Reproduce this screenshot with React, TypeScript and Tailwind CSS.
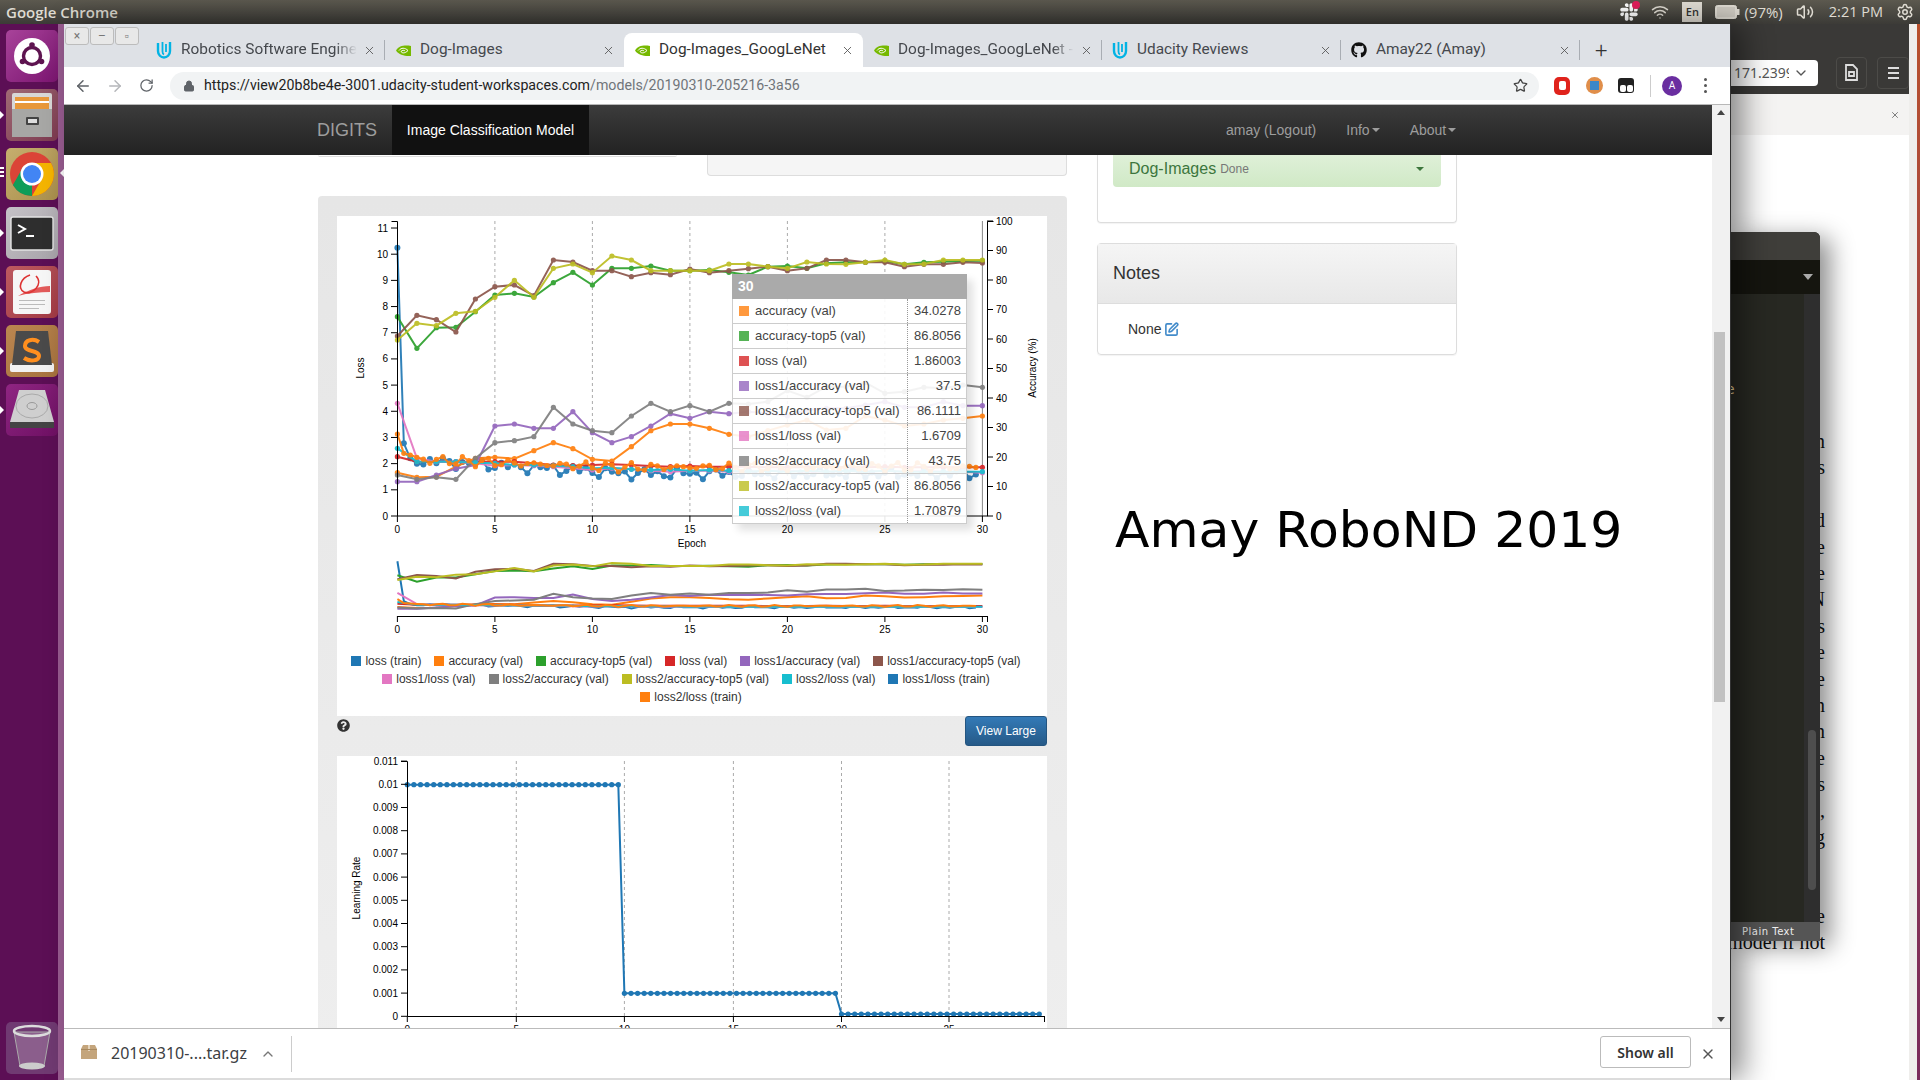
import { ArrowLeft, ArrowRight, ChevronDown, ChevronUp, Lock, RotateCw, Settings, Star, SquarePen, Volume2, Wifi, X } from "lucide-react";
import { FaGithub, FaQuestionCircle, FaSlack } from "react-icons/fa";

const C = {
  lossTrain: "#1f77b4",
  acc: "#ff7f0e",
  top5: "#2ca02c",
  loss: "#d62728",
  l1acc: "#9467bd",
  l1top5: "#8c564b",
  l1loss: "#e377c2",
  l2acc: "#7f7f7f",
  l2top5: "#bcbd22",
  l2loss: "#17becf",
};

// values read off the picture, one per epoch
const top5 = [350, 445, 383, 382, 335, 285, 280, 291, 248, 217, 255, 205, 205, 198, 212, 212, 210, 217, 225, 200, 198, 205, 190, 187, 187, 183, 193, 187, 185, 183, 182];
const l1top5 = [408, 346, 359, 396, 297, 260, 255, 287, 180, 186, 212, 212, 230, 218, 224, 207, 218, 212, 206, 200, 212, 205, 180, 180, 187, 187, 200, 193, 193, 187, 189];
const l2top5 = [420, 370, 377, 340, 334, 292, 241, 292, 205, 192, 218, 168, 180, 212, 212, 212, 212, 192, 192, 200, 205, 186, 192, 193, 187, 180, 193, 192, 180, 180, 180];
const l2acc = [825, 838, 832, 838, 775, 728, 722, 710, 622, 672, 692, 698, 648, 610, 635, 617, 635, 610, 612, 605, 572, 592, 560, 560, 548, 580, 575, 562, 565, 555, 562];
const l1acc = [845, 845, 825, 806, 795, 678, 672, 685, 685, 635, 698, 728, 710, 678, 641, 655, 635, 641, 635, 640, 648, 630, 625, 625, 615, 605, 622, 622, 605, 617, 617];
const acc = [818, 832, 830, 800, 775, 772, 776, 752, 728, 746, 778, 783, 740, 692, 672, 672, 685, 703, 710, 692, 675, 660, 690, 685, 648, 660, 678, 672, 660, 655, 648];
const lossVal = [770, 785, 785, 785, 785, 785, 785, 790, 795, 797, 795, 793, 795, 798, 800, 798, 800, 800, 800, 802, 802, 802, 800, 802, 802, 800, 802, 802, 802, 802, 802];
const l1loss = [610, 775, 785, 785, 790, 797, 795, 797, 800, 805, 810, 805, 808, 812, 815, 812, 812, 815, 815, 812, 812, 815, 815, 812, 815, 812, 815, 812, 815, 815, 818];
const l2loss = [745, 785, 785, 785, 788, 790, 795, 795, 797, 800, 805, 803, 808, 810, 808, 812, 810, 812, 815, 812, 815, 812, 815, 812, 815, 812, 815, 815, 815, 815, 815];

const ex = (e: number) => 397.4 + e * 19.5;
const zy = (v: number) => 200 + v / 3;

function perEpoch(vals: number[]): [number, number][] {
  return vals.map((v, i) => [ex(i), zy(v)]);
}

function trainBlue(): [number, number][] {
  const pts: [number, number][] = [[ex(0), zy(143)], [ex(0.33), zy(730)], [ex(0.66), zy(775)]];
  for (let i = 3; i <= 89; i++) {
    const e = i / 3;
    const base = 778 + Math.min(e, 11) * 3.6 + (e > 11 ? 3 : 0);
    pts.push([ex(e), zy(base + 11 * Math.sin(i * 2.3) + 8 * Math.sin(i * 5.1))]);
  }
  return pts;
}

function trainOrange(): [number, number][] {
  const pts: [number, number][] = [[ex(0), zy(702)], [ex(0.33), zy(760)], [ex(0.66), zy(765)]];
  for (let i = 3; i <= 89; i++) {
    const e = i / 3;
    const base = 776 + Math.min(e, 11) * 2.3;
    pts.push([ex(e), zy(base + 9 * Math.sin(i * 1.7) + 6 * Math.sin(i * 4.3))]);
  }
  return pts;
}

const series: { color: string; pts: [number, number][]; dot: number }[] = [
  { color: C.lossTrain, pts: trainBlue(), dot: 3 },
  { color: C.acc, pts: perEpoch(acc), dot: 2.6 },
  { color: C.top5, pts: perEpoch(top5), dot: 2.6 },
  { color: C.loss, pts: perEpoch(lossVal), dot: 2.6 },
  { color: C.l1acc, pts: perEpoch(l1acc), dot: 2.6 },
  { color: C.l1top5, pts: perEpoch(l1top5), dot: 2.6 },
  { color: C.l1loss, pts: perEpoch(l1loss), dot: 2.6 },
  { color: C.l2acc, pts: perEpoch(l2acc), dot: 2.6 },
  { color: C.l2top5, pts: perEpoch(l2top5), dot: 2.6 },
  { color: C.l2loss, pts: perEpoch(l2loss), dot: 2.6 },
  { color: C.acc, pts: trainOrange(), dot: 2.6 },
];

const toPath = (pts: [number, number][]) => pts.map(([x, y]) => `${x},${y}`).join(" ");

function MainChart() {
  const ticksX = [0, 5, 10, 15, 20, 25, 30];
  return (
    <svg width={710} height={430} viewBox="337 216 710 430" className="block">
      {[5, 10, 15, 20, 25].map((e) => (
        <line key={e} x1={ex(e)} x2={ex(e)} y1={221} y2={516} stroke="#aaa" strokeDasharray="3 3" />
      ))}
      <line x1={ex(30)} x2={ex(30)} y1={221} y2={516} stroke="#888" />
      {series.map((s, i) => (
        <g key={i} opacity={0.92}>
          <polyline points={toPath(s.pts)} fill="none" stroke={s.color} strokeWidth={2} />
          {s.pts.map(([x, y], j) => (
            <circle key={j} cx={x} cy={y} r={s.dot} fill={s.color} />
          ))}
        </g>
      ))}
      {/* axes */}
      <path d="M391.5 221.5H397.5V516H987.5V221.5H993.5" fill="none" stroke="#000" />
      {Array.from({ length: 12 }, (_, i) => {
        const y = 516 - i * 26.18;
        return (
          <g key={i}>
            <line x1={391} x2={397} y1={y} y2={y} stroke="#000" />
            <text x={388} y={y + 3.5} fontSize={10} textAnchor="end" fill="#000">{i}</text>
          </g>
        );
      })}
      {Array.from({ length: 11 }, (_, i) => {
        const y = 516 - i * 29.5;
        return (
          <g key={i}>
            <line x1={987} x2={993} y1={y} y2={y} stroke="#000" />
            <text x={996} y={y + 3.5} fontSize={10} fill="#000">{i * 10}</text>
          </g>
        );
      })}
      {ticksX.map((e) => (
        <g key={e}>
          <line x1={ex(e)} x2={ex(e)} y1={516} y2={522} stroke="#000" />
          <text x={ex(e)} y={533} fontSize={10} textAnchor="middle" fill="#000">{e}</text>
        </g>
      ))}
      <text x={692} y={547} fontSize={10} textAnchor="middle" fill="#000">Epoch</text>
      <text transform="translate(364 368) rotate(-90)" fontSize={10} textAnchor="middle" fill="#000">Loss</text>
      <text transform="translate(1036 368) rotate(-90)" fontSize={10} textAnchor="middle" fill="#000">Accuracy (%)</text>

      {/* sub chart */}
      <g transform="translate(0 510.9) scale(1 0.2034)">
        {series.map((s, i) => (
          <polyline key={i} points={toPath(s.pts)} fill="none" stroke={s.color} strokeWidth={2} vectorEffect="non-scaling-stroke" />
        ))}
      </g>
      <line x1={397} x2={987} y1={616.5} y2={616.5} stroke="#000" />
      <line x1={987.5} x2={987.5} y1={616} y2={622} stroke="#000" />
      {ticksX.map((e) => (
        <g key={e}>
          <line x1={ex(e)} x2={ex(e)} y1={616} y2={622} stroke="#000" />
          <text x={ex(e)} y={633} fontSize={10} textAnchor="middle" fill="#000">{e}</text>
        </g>
      ))}
    </svg>
  );
}

function LearningRateChart() {
  const x0 = 407.3;
  const y0 = 1016.3;
  const step = 23.2;
  const gx = [516.3, 624.4, 733.4, 841.5, 949];
  const lr: [number, number][] = [];
  for (let i = 0; i <= 32; i++) lr.push([x0 + i * 6.594, 784.7]);
  for (let i = 0; i <= 32; i++) lr.push([624.4 + i * 6.594, 993.3]);
  for (let i = 0; i <= 30; i++) lr.push([841.5 + i * 6.594, 1014]);
  const labels = ["0", "0.001", "0.002", "0.003", "0.004", "0.005", "0.006", "0.007", "0.008", "0.009", "0.01", "0.011"];
  return (
    <svg width={710} height={290} viewBox="337 756 710 290" className="block">
      {gx.map((x) => (
        <line key={x} x1={x} x2={x} y1={761} y2={y0} stroke="#aaa" strokeDasharray="3 3" />
      ))}
      <polyline points={toPath(lr)} fill="none" stroke="#1f77b4" strokeWidth={2} />
      {lr.map(([x, y], i) => (
        <circle key={i} cx={x} cy={y} r={2.6} fill="#1f77b4" />
      ))}
      <path d="M401 761.5H407.5V1016.5H1045" fill="none" stroke="#000" />
      {labels.map((t, i) => {
        const y = y0 - i * step;
        return (
          <g key={t}>
            <line x1={401} x2={407} y1={y} y2={y} stroke="#000" />
            <text x={398} y={y + 3.5} fontSize={10} textAnchor="end" fill="#000">{t}</text>
          </g>
        );
      })}
      {[x0, ...gx].map((x, i) => (
        <g key={x}>
          <line x1={x} x2={x} y1={1016} y2={1022} stroke="#000" />
          <text x={x} y={1033} fontSize={10} textAnchor="middle" fill="#000">{i * 5}</text>
        </g>
      ))}
      <line x1={1044.5} x2={1044.5} y1={1016} y2={1022} stroke="#000" />
      <text transform="translate(360 888) rotate(-90)" fontSize={10} textAnchor="middle" fill="#000">Learning Rate</text>
    </svg>
  );
}

const tooltipRows = [
  ["accuracy (val)", "34.0278", "#ff7f0e"],
  ["accuracy-top5 (val)", "86.8056", "#2ca02c"],
  ["loss (val)", "1.86003", "#d62728"],
  ["loss1/accuracy (val)", "37.5", "#9467bd"],
  ["loss1/accuracy-top5 (val)", "86.1111", "#8c564b"],
  ["loss1/loss (val)", "1.6709", "#e377c2"],
  ["loss2/accuracy (val)", "43.75", "#7f7f7f"],
  ["loss2/accuracy-top5 (val)", "86.8056", "#bcbd22"],
  ["loss2/loss (val)", "1.70879", "#17becf"],
];

function Tooltip() {
  return (
    <div className="absolute left-[395px] top-[58px] w-[235px] bg-white/90 text-[13px] text-[#444] shadow-[6px_6px_8px_rgba(0,0,0,0.12)]">
      <div className="h-[25px] bg-[#aaa] pl-[6px] text-[14px] leading-[25px] font-bold text-white">30</div>
      {tooltipRows.map(([name, value, color]) => (
        <div key={name} className="flex h-[25px] border border-t-0 border-[#ccc]">
          <div className="flex w-[174px] items-center pl-[6px] whitespace-nowrap">
            <span className="mr-[6px] h-[10px] w-[10px] shrink-0 opacity-80" style={{ backgroundColor: color }} />
            {name}
          </div>
          <div className="flex-1 border-l border-dotted border-[#999] pr-[5px] text-right leading-[24px]">{value}</div>
        </div>
      ))}
    </div>
  );
}

const legendRows = [
  [["loss (train)", "#1f77b4"], ["accuracy (val)", "#ff7f0e"], ["accuracy-top5 (val)", "#2ca02c"], ["loss (val)", "#d62728"], ["loss1/accuracy (val)", "#9467bd"], ["loss1/accuracy-top5 (val)", "#8c564b"]],
  [["loss1/loss (val)", "#e377c2"], ["loss2/accuracy (val)", "#7f7f7f"], ["loss2/accuracy-top5 (val)", "#bcbd22"], ["loss2/loss (val)", "#17becf"], ["loss1/loss (train)", "#1f77b4"]],
  [["loss2/loss (train)", "#ff7f0e"]],
];

function Legend() {
  return (
    <div className="mt-[6px] pr-[12px] text-[12px] text-[#333]">
      {legendRows.map((row, i) => (
        <div key={i} className={`flex h-[18px] items-center justify-center gap-[13px] ${i === 2 ? "pl-[10px]" : ""}`}>
          {row.map(([name, color]) => (
            <div key={name} className="flex items-center gap-[4px] whitespace-nowrap">
              <span className="h-[10px] w-[10px]" style={{ backgroundColor: color }} />
              {name}
            </div>
          ))}
        </div>
      ))}
    </div>
  );
}

function UdacityLogo() {
  return (
    <svg width={16} height={18} viewBox="0 0 16 18">
      <path d="M2 2V10C2 14 5 16.5 8 16.5C11 16.5 14 14 14 10V1" fill="none" stroke="#02b3e4" strokeWidth={2.4} />
      <path d="M6.5 1V10.5C6.5 12 7 13 8 13.5M10 3V11" fill="none" stroke="#02b3e4" strokeWidth={1.8} />
    </svg>
  );
}

function NvidiaLogo() {
  return (
    <svg width={15} height={13} viewBox="0 0 15 13">
      <path d="M0 6.5C3 1.5 9 1 15 2V12C9 12.5 3 11 0 6.5Z" fill="#76b900" />
      <path d="M3 6.5C5 3.5 9 3.5 12 6.5C9 9.5 6 9.5 5 7.5C6.5 6 8 6 9 7" fill="none" stroke="#fff" strokeWidth={1} />
    </svg>
  );
}

type TabProps = { title: string; icon: "u" | "n" | "g"; active?: boolean; fade?: boolean; sep?: boolean };

function Tab({ title, icon, active, fade, sep }: TabProps) {
  return (
    <div className={`relative flex h-[34px] w-[239px] items-center ${active ? "rounded-t-[8px] bg-white text-[#333]" : "text-[#45484d]"}`}>
      <div className="flex w-[35px] justify-center pl-[1px]">
        {icon === "u" && <UdacityLogo />}
        {icon === "n" && <NvidiaLogo />}
        {icon === "g" && <FaGithub size={16} color="#111" />}
      </div>
      <div className={`w-[176px] overflow-hidden text-[15.4px] whitespace-nowrap ${fade ? "[mask-image:linear-gradient(to_right,#000_88%,transparent)]" : ""}`}>{title}</div>
      <X size={13} strokeWidth={1.6} className="ml-[6px] text-[#555]" />
      {sep && <span className="absolute top-[7px] right-0 h-[20px] w-px bg-[#a9adb3]" />}
    </div>
  );
}

function Tile({ bg, children }: { bg: string; children: React.ReactNode }) {
  return (
    <div className="h-[52px] w-[52px] overflow-hidden rounded-[5px]" style={{ background: bg }}>
      <svg width={52} height={52} viewBox="0 0 52 52">
        {children}
      </svg>
    </div>
  );
}

function Launcher() {
  return (
    <div className="relative flex h-full w-[64px] shrink-0 flex-col border-r-[6px] border-[#9a5d92] bg-[#5c0f55] pt-[6px] pl-[6px]">
      <div className="flex flex-col gap-[7px]">
        <Tile bg="linear-gradient(135deg,#a8439a,#7b1570)">
          <circle cx={26} cy={26} r={18} fill="#fff" />
          <circle cx={26} cy={26} r={8.5} fill="none" stroke="#5e1450" strokeWidth={3.4} />
          <circle cx={26} cy={15} r={2.8} fill="#5e1450" />
          <circle cx={16.5} cy={31.5} r={2.8} fill="#5e1450" />
          <circle cx={35.5} cy={31.5} r={2.8} fill="#5e1450" />
        </Tile>
        <Tile bg="linear-gradient(135deg,#a06a75,#7d3a50)">
          <rect x={6} y={4} width={40} height={44} rx={2} fill="#d8d8d6" />
          <rect x={9} y={8} width={34} height={12} fill="#e8983a" />
          <rect x={9} y={12} width={34} height={2} fill="#fff" />
          <rect x={6} y={20} width={40} height={28} fill="#a7a7a5" />
          <rect x={20} y={28} width={13} height={8} rx={1} fill="#444" />
          <rect x={22} y={30} width={9} height={4} fill="#ddd" />
        </Tile>
        <Tile bg="linear-gradient(135deg,#c6ae6e,#a98f4c)">
          <circle cx={26} cy={26} r={22} fill="#db4437" />
          <path d="M26 48A22 22 0 0 1 6.9 37L16 21L26 37Z" fill="#0f9d58" />
          <path d="M26 15H45A22 22 0 0 1 26 48L37 29Z" fill="#f4b400" />
          <circle cx={26} cy={26} r={11.5} fill="#fff" />
          <circle cx={26} cy={26} r={9} fill="#4285f4" />
        </Tile>
        <Tile bg="linear-gradient(135deg,#c5c2c7,#a7a3a9)">
          <rect x={5} y={10} width={42} height={33} rx={2} fill="#2e2e2e" stroke="#e4e4e4" strokeWidth={1.4} />
          <path d="M12 18L19 22L12 26" fill="none" stroke="#fff" strokeWidth={2} />
          <rect x={20} y={28} width={8} height={2} fill="#fff" />
        </Tile>
        <Tile bg="linear-gradient(135deg,#bd5a60,#a23a44)">
          <rect x={7} y={4} width={38} height={44} rx={3} fill="#f6f6f6" />
          <path d="M24 9C15 12 11 22 18 26C26 30 38 18 30 10" fill="none" stroke="#d33" strokeWidth={1.6} />
          <path d="M12 30C22 24 34 20 44 20V26C34 26 22 27 12 30Z" fill="#d33" opacity={0.8} />
          <rect x={13} y={34} width={26} height={1} fill="#bbb" />
          <rect x={13} y={38} width={26} height={1} fill="#bbb" />
          <rect x={13} y={42} width={20} height={1} fill="#bbb" />
        </Tile>
        <Tile bg="linear-gradient(135deg,#bb8650,#a6723e)">
          <rect x={4} y={38} width={44} height={9} rx={2} fill="#f2f2f2" />
          <path d="M10 6H42L46 40H6Z" fill="#4a4a4a" />
          <path d="M33 17C27 13 19 15 19 21C19 27 33 25 33 31C33 36 24 37 18 33" fill="none" stroke="#ff8f1f" strokeWidth={4} />
        </Tile>
        <Tile bg="linear-gradient(135deg,#8f2582,#6e1063)">
          <path d="M13 6H39L48 38V44H4V38Z" fill="#cfcfcf" />
          <ellipse cx={26} cy={22} rx={16} ry={12} fill="none" stroke="#aaa" />
          <ellipse cx={26} cy={22} rx={5} ry={3.5} fill="none" stroke="#999" />
          <rect x={4} y={38} width={44} height={6} fill="#444" />
        </Tile>
      </div>
      <div className="mt-auto mb-[6px]">
        <Tile bg="#703a72">
          <path d="M8 10L14 44H38L44 10Z" fill="#8b5e8c" stroke="#aaa" />
          <ellipse cx={26} cy={9} rx={18} ry={5} fill="none" stroke="#ddd" strokeWidth={2.5} />
          <ellipse cx={26} cy={44} rx={13} ry={3.5} fill="#ccc" />
        </Tile>
      </div>
      {/* launcher pips */}
      {[115, 233, 292, 351, 410].map((t) => (
        <span key={t} className="absolute left-0 h-0 w-0 border-y-[4px] border-l-[4px] border-y-transparent border-l-white" style={{ top: t - 28 }} />
      ))}
      <span className="absolute top-[143px] left-0 flex flex-col gap-[2px]">
        <span className="h-[2px] w-[4px] bg-white" />
        <span className="h-[2px] w-[4px] bg-white" />
        <span className="h-[2px] w-[4px] bg-white" />
      </span>
      <span className="absolute top-[145px] -right-[6px] h-0 w-0 border-y-[4px] border-r-[4px] border-y-transparent border-r-white" />
    </div>
  );
}

function TopBar() {
  return (
    <div className="flex h-[24px] items-center bg-gradient-to-b from-[#5c594f] to-[#3c3b37] pl-[6px] font-['Open_Sans',sans-serif] text-[15px] text-[#dfdbd2]">
      <span className="font-semibold">Google Chrome</span>
      <div className="ml-auto flex items-center">
        <div className="relative mr-[12px]">
          <FaSlack size={20} color="#fff" />
          <span className="absolute -top-[1px] -right-[1px] h-[8px] w-[8px] rounded-full bg-[#e01e5a]" />
        </div>
        <Wifi size={18} className="mr-[13px]" />
        <span className="mr-[13px] flex h-[20px] w-[20px] items-center justify-center bg-[#dfdbd2] text-[11px] font-semibold text-[#333]">En</span>
        <svg width={25} height={16} viewBox="0 0 25 16" className="mr-[4px]">
          <rect x={0.5} y={1.5} width={21} height={13} rx={2} fill="#dfdbd2" stroke="#dfdbd2" />
          <rect x={2} y={3} width={18} height={10} fill="#cfcbc2" />
          <rect x={22} y={5} width={2.5} height={6} fill="#dfdbd2" />
        </svg>
        <span className="mr-[13px]">(97%)</span>
        <Volume2 size={18} className="mr-[15px]" />
        <span className="mr-[13px] text-[14.5px]">2:21 PM</span>
        <Settings size={18} className="mr-[6px]" />
      </div>
    </div>
  );
}

function BrowserChrome() {
  return (
    <>
      <div className="flex h-[43px] bg-[#dee1e6] pt-[9px] font-['Roboto',sans-serif]">
        <div className="-mt-[6px] flex w-[82px] gap-[1px] pl-[1px]">
          {["×", "–", "▫"].map((g) => (
            <span key={g} className="flex h-[18px] w-[24px] items-center justify-center rounded-[3px] border border-[#bcbcbc] bg-[#e8e8e8] text-[12px] text-[#777]">{g}</span>
          ))}
        </div>
        <Tab title="Robotics Software Engineer" icon="u" fade sep />
        <Tab title="Dog-Images" icon="n" />
        <Tab title="Dog-Images_GoogLeNet" icon="n" active />
        <Tab title="Dog-Images_GoogLeNet - Model" icon="n" fade sep />
        <Tab title="Udacity Reviews" icon="u" sep />
        <Tab title="Amay22 (Amay)" icon="g" sep />
        <span className="ml-[15px] flex h-[34px] items-center text-[22px] font-light text-[#333]">+</span>
      </div>
      <div className="flex h-[38px] items-center border-b border-[#b8b8b8] bg-white font-['Roboto',sans-serif]">
        <div className="flex w-[106px] items-center">
          <ArrowLeft size={18} className="ml-[10px] text-[#5f6368]" />
          <ArrowRight size={18} className="ml-[14px] text-[#b5b7ba]" />
          <RotateCw size={15} className="ml-[15px] text-[#5f6368]" />
        </div>
        <div className="flex h-[28px] w-[1369px] items-center rounded-full bg-[#f1f3f4] pl-[13px] text-[14.2px]">
          <Lock size={12} fill="#5f6368" className="text-[#5f6368]" />
          <span className="ml-[9px] text-[#222]">
            https://view20b8be4e-3001.udacity-student-workspaces.com<span className="text-[#70757a]">/models/20190310-205216-3a56</span>
          </span>
          <Star size={15} className="mr-[11px] ml-auto text-[#444]" />
        </div>
        <div className="ml-[15px] flex items-center">
          <span className="flex h-[18px] w-[16px] items-center justify-center rounded-[5px] bg-[#e0231c]">
            <span className="h-[9px] w-[7px] rounded-[2px] bg-white" />
          </span>
          <span className="ml-[16px] flex h-[17px] w-[17px] items-center justify-center rounded-full bg-[#e08e4a]">
            <span className="h-[9px] w-[9px] bg-[#3c87c8]" />
          </span>
          <span className="ml-[15px] flex h-[15px] w-[16px] items-end justify-center gap-[1px] rounded-[3px] bg-[#222] pb-[1px]">
            <span className="h-[7px] w-[6px] rounded-[2px] bg-white" />
            <span className="h-[7px] w-[6px] rounded-[2px] bg-white" />
          </span>
          <span className="ml-[16px] h-[22px] w-px bg-[#ccc]" />
          <span className="ml-[11px] flex h-[20px] w-[20px] items-center justify-center rounded-full bg-[#6a2ea0] text-[10px] text-white">A</span>
          <span className="ml-[22px] flex flex-col gap-[3px]">
            <span className="h-[3px] w-[3px] rounded-full bg-[#555]" />
            <span className="h-[3px] w-[3px] rounded-full bg-[#555]" />
            <span className="h-[3px] w-[3px] rounded-full bg-[#555]" />
          </span>
        </div>
      </div>
    </>
  );
}

function Navbar() {
  return (
    <div className="flex h-[50px] shrink-0 items-stretch bg-gradient-to-b from-[#3c3c3c] to-[#222] pl-[253px] text-[14px] text-[#9d9d9d]">
      <span className="flex w-[75px] items-center text-[18px]">DIGITS</span>
      <span className="flex w-[197px] items-center justify-center bg-[#111] text-white">Image Classification Model</span>
      <div className="ml-[637px] flex items-center">
        <span>amay (Logout)</span>
        <span className="ml-[30px] flex items-center">
          Info
          <span className="ml-[2px] h-0 w-0 border-x-[4px] border-t-[4px] border-x-transparent border-t-[#9d9d9d]" />
        </span>
        <span className="ml-[30px] flex items-center">
          About
          <span className="ml-[2px] h-0 w-0 border-x-[4px] border-t-[4px] border-x-transparent border-t-[#9d9d9d]" />
        </span>
      </div>
    </div>
  );
}

function PageBody() {
  return (
    <div className="flex min-h-0 flex-1 gap-[30px] overflow-hidden pl-[254px] text-[14px] text-[#333]">
      <div className="w-[749px] shrink-0">
        <div className="flex h-[41px] items-start justify-between">
          <div className="h-[2px] w-[359px] rounded-b border-b border-[#ddd]" />
          <div className="h-[21px] w-[360px] rounded-b border border-t-0 border-[#ddd] bg-[#f5f5f5]" />
        </div>
        <div className="rounded-t bg-gradient-to-b from-[#e6e6e6] to-[#eeeeee] px-[19px] pt-[20px]">
          <div className="relative h-[500px] w-[710px] bg-white">
            <MainChart />
            <Legend />
            <Tooltip />
          </div>
          <div className="flex h-[40px] items-start justify-between">
            <FaQuestionCircle size={13} color="#333" className="mt-[3px]" />
            <button className="mr-[1px] h-[30px] w-[82px] rounded-[3px] border border-[#245580] bg-gradient-to-b from-[#337ab7] to-[#265a88] text-[12px] text-white">View Large</button>
          </div>
          <div className="h-[290px] w-[710px] bg-white">
            <LearningRateChart />
          </div>
        </div>
      </div>
      <div className="w-[360px] shrink-0">
        <div className="h-[68px] rounded-b border border-t-0 border-[#ddd] px-[15px] shadow-[0_1px_1px_rgba(0,0,0,0.05)]">
          <div className="flex h-[32px] items-center rounded-b bg-gradient-to-b from-[#dff0d8] to-[#d0e9c6] pr-[17px] pb-[5px] pl-[16px] text-[#3c763d]">
            <span className="text-[16px]">Dog-Images</span>
            <span className="ml-[4px] text-[12px] text-[#777]">Done</span>
            <span className="ml-auto h-0 w-0 border-x-[4px] border-t-[4px] border-x-transparent border-t-[#3c763d]" />
          </div>
        </div>
        <div className="mt-[20px] h-[112px] rounded border border-[#ddd] shadow-[0_1px_1px_rgba(0,0,0,0.05)]">
          <div className="flex h-[60px] items-center border-b border-[#ddd] bg-gradient-to-b from-[#f5f5f5] to-[#e8e8e8] pl-[15px] text-[18px]">Notes</div>
          <div className="flex h-[50px] items-center pl-[30px]">
            None
            <SquarePen size={15} strokeWidth={2.6} className="ml-[3px] text-[#428bca]" />
          </div>
        </div>
        <div className="mt-[140px] ml-[18px] font-['DejaVu_Sans',sans-serif] text-[50.4px] leading-[70px] whitespace-nowrap text-black">Amay RoboND 2019</div>
      </div>
    </div>
  );
}

function DownloadBar() {
  return (
    <div className="flex h-[50px] shrink-0 items-center border-t border-[#bbb] bg-white font-['Noto_Sans',sans-serif] text-[16px] text-[#3c4043]">
      <svg width={16} height={14} viewBox="0 0 16 14" className="mb-[3px] ml-[17px]">
        <path d="M2 0H14L16 4V14H0V4Z" fill="#c4a57c" />
        <rect x={7} y={0} width={2} height={6} fill="#e4d4bc" />
        <rect x={0} y={4} width={16} height={1} fill="#a98a60" />
      </svg>
      <span className="mb-[1px] ml-[14px]">20190310-....tar.gz</span>
      <ChevronUp size={16} className="ml-[13px] text-[#777]" />
      <span className="ml-[15px] h-[36px] w-px bg-[#ccc]" />
      <button className="mb-[3px] ml-auto h-[32px] w-[91px] rounded-[3px] border border-[#bbb] text-[14px] font-semibold text-[#333]">Show all</button>
      <X size={16} className="mr-[14px] ml-[9px] text-[#555]" />
    </div>
  );
}

function Scrollbar() {
  return (
    <div className="absolute top-0 right-0 bottom-0 z-20 w-[18px] bg-[#f1f1f1] pt-[5px]">
      <span className="ml-[5px] block h-0 w-0 border-x-[4px] border-b-[5px] border-x-transparent border-b-[#444]" />
      <span className="mt-[217px] ml-[2px] block h-[370px] w-[11px] bg-[#c1c1c1]" />
      <span className="mt-[315px] ml-[5px] block h-0 w-0 border-x-[4px] border-t-[5px] border-x-transparent border-t-[#444]" />
    </div>
  );
}

const behindLines = ["n", "s", "", "d", "e", "e", "N", "s", "e", "e", "n", "n", "e", "s", ",", "g", "", "", "e", "model if not"];

function BackWindow() {
  return (
    <div className="relative flex min-w-0 flex-1">
      <div className="relative w-[178px] overflow-hidden bg-white">
        <div className="flex h-[70px] items-center bg-[#3a3937] pt-[27px]">
          <div className="flex h-[26px] w-[87px] shrink-0 items-center justify-between rounded-r bg-white pr-[9px] pl-[3px] font-['Noto_Sans',sans-serif] text-[14px] text-[#555]">
            <span className="w-[55px] overflow-hidden whitespace-nowrap">171.2399</span>
            <ChevronDown size={16} />
          </div>
          <span className="ml-[18px] flex h-[32px] w-[31px] shrink-0 items-center justify-center rounded border border-[#4c4b48] text-[#ddd]">
            <svg width={13} height={17} viewBox="0 0 13 17"><path d="M1 1H8L12 5V16H1ZM4 8H9V12H4Z" fill="none" stroke="#ddd" strokeWidth={1.8} /></svg>
          </span>
          <span className="ml-[10px] flex h-[32px] w-[32px] shrink-0 flex-col items-center justify-center gap-[3px] rounded border border-[#4c4b48]">
            <span className="h-[2px] w-[11px] bg-[#ddd]" />
            <span className="h-[2px] w-[11px] bg-[#ddd]" />
            <span className="h-[2px] w-[11px] bg-[#ddd]" />
          </span>
        </div>
        <div className="flex h-[41px] items-center justify-end bg-[#f4f3f2] pr-[9px] text-[#666]">
          <X size={10} />
        </div>
        {/* text of the document behind the editor */}
        <div className="absolute top-[404px] left-0 w-[94px] font-['Liberation_Serif',serif] text-[20px] leading-[26.4px] whitespace-nowrap text-[#111]">
          {behindLines.map((l, i) => (
            <div key={i} className="flex h-[26.4px] justify-end">{l}</div>
          ))}
        </div>
        <div className="absolute top-[208px] left-0 z-10 flex h-[709px] w-[89px] flex-col rounded-tr-[6px] bg-[#272822] shadow-[10px_6px_24px_rgba(0,0,0,0.45)]">
          <div className="h-[28px] rounded-tr-[6px] bg-[#3f3e3a]" />
          <div className="flex h-[34px] items-center justify-end bg-[#15150f] pr-[7px]">
            <span className="h-0 w-0 border-x-[5px] border-t-[6px] border-x-transparent border-t-[#aaa]" />
          </div>
          <div className="relative flex-1">
            <div className="absolute top-0 right-0 bottom-0 w-[16px] bg-[#2e2e2e]" />
            <div className="absolute top-[436px] right-[4px] h-[160px] w-[8px] rounded bg-[#4e4e4e]" />
            <span className="absolute top-[85px] -left-[5px] font-['DejaVu_Sans',sans-serif] text-[14px] text-[#e8d5a0]">e</span>
          </div>
          <div className="flex h-[19px] items-center bg-[#555] pl-[11px] font-['DejaVu_Sans',sans-serif] text-[10px] tracking-[0.5px] text-[#eee]">Plain Text</div>
        </div>
      </div>
      <div className="h-full w-[8px] bg-[#efeeec]" />
      <div className="h-full flex-1 bg-gradient-to-b from-[#b8502c] to-[#7a2b5c]" />
    </div>
  );
}

export default function App() {
  return (
    <div className="flex h-[1080px] w-[1920px] flex-col overflow-hidden bg-[#5c0f55] font-['Liberation_Sans',Arial,sans-serif]">
      <TopBar />
      <div className="flex min-h-0 flex-1">
        <Launcher />
        <div className="relative z-30 flex w-[1667px] shrink-0 flex-col border-r border-[#333] bg-white shadow-[12px_0_28px_rgba(0,0,0,0.45)]">
          <BrowserChrome />
          <div className="relative flex min-h-0 flex-1 flex-col overflow-hidden">
            <Navbar />
            <PageBody />
            <Scrollbar />
          </div>
          <DownloadBar />
          <div className="h-[2px] shrink-0 bg-[#dcdcdc]" />
        </div>
        <BackWindow />
      </div>
    </div>
  );
}
